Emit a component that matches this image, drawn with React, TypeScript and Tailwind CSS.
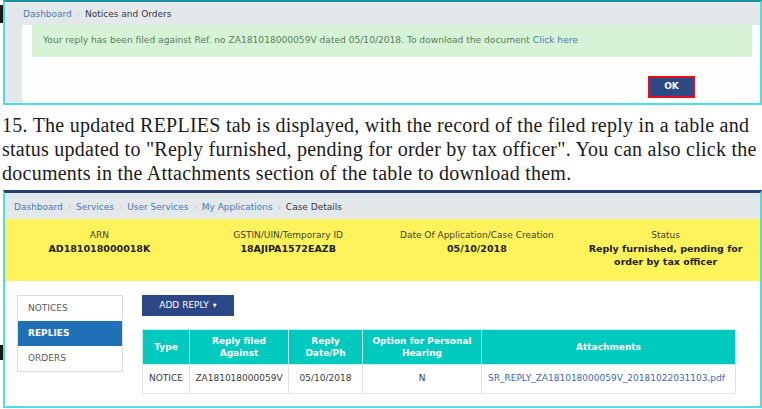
import React from "react";

const ui = { fontFamily: '"DejaVu Sans", Verdana, sans-serif' };

const Crumbs = ({ items }: { items: string[] }) => (
  <div className="flex items-center">
    {items.map((item, i) => {
      const last = i === items.length - 1;
      return (
        <span key={item} className="flex items-center">
          <span className={last ? "text-[#333a40]" : "text-[#4a78b0]"}>{item}</span>
          {!last && <span className="mx-[5px] text-[#b9c0c6] text-[8px]">›</span>}
        </span>
      );
    })}
  </div>
);

const CaseField = ({ label, value }: { label: string; value: string }) => (
  <div className="flex flex-col items-center text-center">
    <span className="text-[9px] leading-[12px] text-[#3f3f30]">{label}</span>
    <span className="mt-[1px] text-[9.5px] leading-[13px] font-bold text-[#222] w-[176px]">{value}</span>
  </div>
);

const navItems = ["NOTICES", "REPLIES", "ORDERS"];

const App = () => {
  return (
    <div className="relative w-[762px] h-[409px] overflow-hidden bg-white" style={ui}>
      {/* dark bits poking in from the left */}
      <div className="absolute left-0 top-[5px] w-[3px] h-[18px] bg-[#1a1a1a]" />
      <div className="absolute left-0 top-[345px] w-[3px] h-[15px] bg-[#1a1a1a]" />

      {/* notices and orders panel */}
      <div className="ml-[3px] h-[105px] flex flex-col border-x-2 border-b-2 border-t-2 border-[#4fdde2] border-t-[#1b93a0]">
        <div className="h-[23px] shrink-0 bg-[#e3e8eb] pl-[18px] pt-[2px] flex items-center text-[9px]">
          <Crumbs items={["Dashboard", "Notices and Orders"]} />
        </div>
        <div className="flex flex-1">
          <div className="w-[17px] bg-[#e3e8eb]" />
          <div className="flex-1 bg-[#fdfefe] pl-[10px] pr-[8px] flex flex-col">
            <div className="h-[32px] bg-[#d6f3d8] pl-[11px] flex items-center text-[9.1px] text-[#5b7e55]">
              Your reply has been filed against Ref. no ZA181018000059V dated 05/10/2018. To download the document&nbsp;
              <span className="text-[#4a7cb6]">Click here</span>
            </div>
            <div className="flex justify-end pr-[57px] mt-[19px]">
              <button className="w-[47px] h-[22px] border-2 border-[#e5101c] bg-[#2d4a87] text-white text-[9px] font-bold">
                OK
              </button>
            </div>
          </div>
        </div>
      </div>

      <p
        className="mt-[8px] pl-[2px] text-[20px] leading-[24px] text-[#1b1b1b] whitespace-nowrap tracking-[0.25px]"
        style={{ fontFamily: '"Liberation Serif", "Times New Roman", serif' }}
      >
        15. The updated REPLIES tab is displayed, with the record of the filed reply in a table and
        <br />
        status updated to "Reply furnished, pending for order by tax officer". You can also click the
        <br />
        documents in the Attachments section of the table to download them.
      </p>

      {/* case details panel */}
      <div className="absolute left-[3px] right-0 top-[190px] h-[218px] flex flex-col border-x-2 border-b-2 border-[#4fdde2] border-t-[3px] border-t-[#233f74]">
        <div className="h-[26px] shrink-0 bg-[#e3e8eb] pl-[9px] pt-[3px] flex items-center text-[9px]">
          <Crumbs items={["Dashboard", "Services", "User Services", "My Applications", "Case Details"]} />
        </div>
        <div className="h-[62px] shrink-0 bg-[#fff35b] grid grid-cols-4 pt-[10px]">
          <CaseField label="ARN" value="AD181018000018K" />
          <CaseField label="GSTIN/UIN/Temporary ID" value="18AJIPA1572EAZB" />
          <CaseField label="Date Of Application/Case Creation" value="05/10/2018" />
          <CaseField label="Status" value="Reply furnished, pending for order by tax officer" />
        </div>

        <div className="flex flex-1 pl-[12px] pt-[14px]">
          <div className="w-[106px] h-[77px] border border-[#dcdcdc] flex flex-col">
            {navItems.map((item) => (
              <div
                key={item}
                className={
                  item === "REPLIES"
                    ? "h-[25px] flex items-center pl-[10px] text-[9px] text-white font-semibold bg-[#1f70b6]"
                    : "h-[25px] flex items-center pl-[10px] text-[9px] text-[#5a5a5a] bg-white"
                }
              >
                {item}
              </div>
            ))}
          </div>

          <div className="ml-[19px] flex flex-col">
            <button className="w-[92px] h-[21px] bg-[#2c4785] text-white text-[9px] flex items-center justify-center gap-[4px]">
              ADD REPLY
              <span className="text-[5px]">▼</span>
            </button>

            <table className="mt-[13px] w-[594px] border-collapse text-[9px] text-center">
              <thead>
                <tr className="h-[35px] bg-[#00cabd] text-white font-bold">
                  <th className="w-[47px] border border-[#c8ece9] leading-[12px]">Type</th>
                  <th className="w-[99px] border border-[#c8ece9] leading-[12px]">
                    Reply filed
                    <br />
                    Against
                  </th>
                  <th className="w-[74px] border border-[#c8ece9] leading-[12px]">
                    Reply
                    <br />
                    Date/Ph
                  </th>
                  <th className="w-[119px] border border-[#c8ece9] leading-[12px]">
                    Option for Personal
                    <br />
                    Hearing
                  </th>
                  <th className="border border-[#c8ece9] leading-[12px]">Attachments</th>
                </tr>
              </thead>
              <tbody>
                <tr className="h-[29px] text-[#3a3a3a]">
                  <td className="border border-[#e2e2e2]">NOTICE</td>
                  <td className="border border-[#e2e2e2]">ZA181018000059V</td>
                  <td className="border border-[#e2e2e2]">05/10/2018</td>
                  <td className="border border-[#e2e2e2]">N</td>
                  <td className="border border-[#e2e2e2] text-left pl-[6px] text-[#3d68b0]">
                    SR_REPLY_ZA181018000059V_20181022031103.pdf
                  </td>
                </tr>
              </tbody>
            </table>
          </div>
        </div>
      </div>
    </div>
  );
};

export default App;
